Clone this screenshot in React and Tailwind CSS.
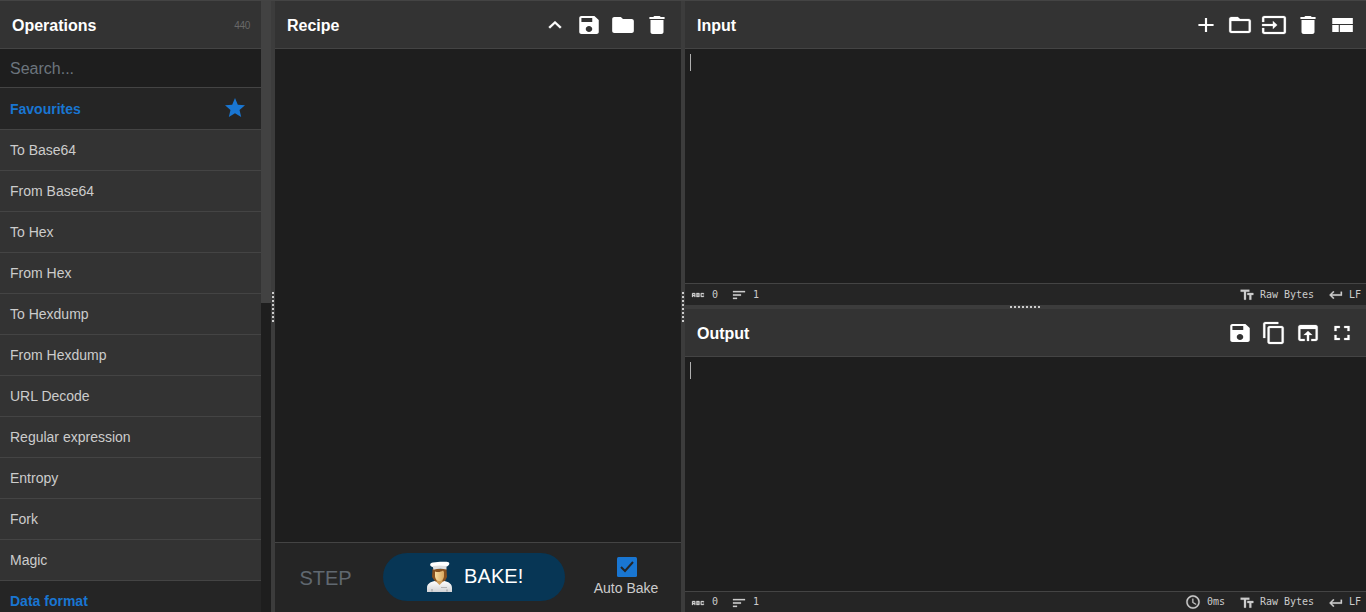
import React from "react";

const PATHS = {
  up: "M7.41 15.41 12 10.83l4.59 4.58L18 14l-6-6-6 6z",
  save: "M17 3H5c-1.11 0-2 .9-2 2v14c0 1.1.89 2 2 2h14c1.1 0 2-.9 2-2V7l-4-4zm-5 16c-1.66 0-3-1.34-3-3s1.34-3 3-3 3 1.34 3 3-1.34 3-3 3zm3-10H5V5h10v4z",
  folder: "M10 4H4c-1.1 0-1.99.9-1.99 2L2 18c0 1.1.9 2 2 2h16c1.1 0 2-.9 2-2V8c0-1.1-.9-2-2-2h-8l-2-2z",
  trash: "M6 19c0 1.1.9 2 2 2h8c1.1 0 2-.9 2-2V7H6v12zM19 4h-3.500l-1-1h-5l-1 1H5v2h14V4z",
  add: "M19 13h-6v6h-2v-6H5v-2h6V5h2v6h6v2z",
  folderOpen: "M20 6h-8l-2-2H4c-1.1 0-1.99.9-1.990 2L2 18c0 1.1.9 2 2 2h16c1.1 0 2-.9 2-2V8c0-1.1-.9-2-2-2zm0 12H4V8h16v10z",
  input: "M21 3.010H3c-1.1 0-2 .9-2 2V9h2V4.990h18v14.030H3V15H1v4.010c0 1.1.9 1.980 2 1.980h18c1.1 0 2-.88 2-1.980v-14c0-1.110-.9-2-2-2zM11 16l4-4-4-4v3H1v2h10v3z",
  layout: "M3 19h6v-7H3v7zm7 0h12v-7H10v7zM3 5v6h19V5H3z",
  copy: "M16 1H4c-1.1 0-2 .9-2 2v14h2V3h12V1zm3 4H8c-1.1 0-2 .9-2 2v14c0 1.1.9 2 2 2h11c1.1 0 2-.9 2-2V7c0-1.1-.9-2-2-2zm0 16H8V7h11v14z",
  open: "M19 4H5c-1.110 0-2 .9-2 2v12c0 1.1.89 2 2 2h4v-2H5V8h14v10h-4v2h4c1.1 0 2-.9 2-2V6c0-1.1-.89-2-2-2zm-7 6-4 4h3v6h2v-6h3l-4-4z",
  full: "M7 14H5v5h5v-2H7v-3zm-2-4h2V7h3V5H5v5zm12 7h-3v2h5v-5h-2v3zM14 5v2h3v3h2V5h-5z",
  star: "M12 17.27 18.18 21l-1.640-7.030L22 9.240l-7.190-.61L12 2 9.190 8.630 2 9.240l5.460 4.730L5.820 21z",
  text: "M2.500 4v3h5v12h3V7h5V4h-13zm19 5h-9v3h3v7h3v-7h3V9z",
  enter: "M19 7v4H5.830l3.580-3.590L8 6l-6 6 6 6 1.410-1.410L5.830 13H21V7z",
  lines: "M3 18h6v-2H3v2zM3 6v2h18V6H3zm0 7h12v-2H3v2z",
  clock: "M11.990 2C6.470 2 2 6.480 2 12s4.470 10 9.990 10C17.520 22 22 17.520 22 12S17.520 2 11.990 2zM12 20c-4.420 0-8-3.580-8-8s3.580-8 8-8 8 3.580 8 8-3.580 8-8 8zm.5-13H11v6l5.250 3.150.75-1.230-4.500-2.670z",
  abc: "M21 11h-1.500v-.5h-2v3h2V13H21v1c0 .55-.45 1-1 1h-3c-.55 0-1-.45-1-1v-4c0-.55.45-1 1-1h3c.55 0 1 .45 1 1v1zM8 10v5H6.500v-1.500h-2V15H3v-5c0-.55.45-1 1-1h3c.55 0 1 .45 1 1zm-1.500.5h-2V12h2v-1.500zM14.500 11c0 .55-.45 1-1 1 .55 0 1 .45 1 1v1c0 .55-.45 1-1 1h-4V9h4c.55 0 1 .45 1 1v1zM11 10.500v.75h2v-.75h-2zm0 2.250v.75h2v-.75h-2z",
};

function Icon({ name, className }) {
  return (
    <svg viewBox="0 0 24 24" preserveAspectRatio="none" fill="currentColor" className={`shrink-0 ${className}`}>
      <path d={PATHS[name]} />
    </svg>
  );
}

const BOLD = ["up", "folderOpen", "input", "copy", "open", "full"];

function Title({ label, icons, children }) {
  return (
    <header className="flex h-12 shrink-0 items-center justify-between border-b border-[#444] bg-[#333] pl-3 text-white">
      <h2 className="pt-[2px] text-base font-bold">{label}</h2>
      {children}
      {icons && (
        <div className="flex pr-[7px]">
          {icons.map((n) => (
            <button key={n} className="flex w-[34px] justify-center">
              <Icon name={n} className={`h-6 w-[26px] ${BOLD.includes(n) ? "stroke-white [stroke-width:0.2]" : ""}`} />
            </button>
          ))}
        </div>
      )}
    </header>
  );
}

const STATUS_ICON = "h-4 w-4 stroke-[#ccc] [stroke-width:0.4]";

function Status({ time }) {
  return (
    <div className={`flex shrink-0 items-center border-t border-[#444] bg-[#252525] pr-[5px] pl-[5px] font-['DejaVu_Sans_Mono',monospace] text-[10px] leading-none text-[#ccc] ${time ? "h-[21px]" : "h-[22px]"}`}>
      <Icon name="abc" className={`mt-px ${STATUS_ICON}`} />
      <span className="ml-[6px]">0</span>
      <Icon name="lines" className={`mt-px ml-[13px] ${STATUS_ICON}`} />
      <span className="ml-[6px]">1</span>
      <span className="grow" />
      {time && (
        <>
          <Icon name="clock" className={STATUS_ICON} />
          <span className="mr-[14px] ml-[6px]">{time}</span>
        </>
      )}
      <Icon name="text" className={`mt-px ${STATUS_ICON}`} />
      <span className="ml-[5px] -tracking-[0.02px]">Raw Bytes</span>
      <Icon name="enter" className={`mt-px ml-[14px] ${STATUS_ICON}`} />
      <span className="ml-[5px]">LF</span>
    </div>
  );
}

function Editor() {
  return (
    <div className="min-h-0 grow bg-[#1e1e1e] pt-[5px] pl-[5px]">
      <div className="h-[17px] w-px bg-[#b0b0b0]" />
    </div>
  );
}

function Dots({ vertical }) {
  return (
    <div className={vertical ? "flex flex-col gap-[2px]" : "flex gap-[2px]"}>
      {Array.from({ length: 8 }, (_, i) => (
        <i key={i} className="block size-[2px] bg-[#ccc]" />
      ))}
    </div>
  );
}

function VGutter() {
  return (
    <div className="flex w-1 shrink-0 flex-col items-center justify-center bg-[#3c3c3c]">
      <div className="flex h-[31px] items-center"><Dots vertical /></div>
    </div>
  );
}

function Chef() {
  return (
    <svg viewBox="0 0 32 32" className="mb-px h-8 w-8">
      <defs>
        <linearGradient id="coat" x1="0" y1="0" x2="0" y2="1">
          <stop offset="0" stopColor="#fff" />
          <stop offset="1" stopColor="#d2d3d5" />
        </linearGradient>
        <linearGradient id="skin" x1="0" y1="0" x2="1" y2="0">
          <stop offset="0" stopColor="#f8dda0" />
          <stop offset="1" stopColor="#d9a962" />
        </linearGradient>
      </defs>
      <path d="M9.500 8h14l.5 8-2.500 5h-9L9 16z" fill="#85501f" />
      <path d="M4 31v-4c0-4 3-6 7.500-7l5 2 5-2c4.500 1 7.500 3 7.500 7v4z" fill="url(#coat)" />
      <path d="M13.500 17h6v4l-3 3-3-3z" fill="#cf9d58" />
      <path d="M12 10.500c3 1 6 .5 8-1l1 1.500v4c0 3-2.500 5-4.500 5S12 18 12 15z" fill="url(#skin)" />
      <path d="M9.500 6C6.200 5 6.500 1.800 10 1.500c4-.8 9-.8 13-.7 4-.3 4.500 3 1 4.700z" fill="#fff" />
      <path d="M9.500 5c5-.7 9-.7 14 0v3.500c-4-1-9-1-13 .3z" fill="#dedede" />
      <path d="M9 28v2.500M24 28.500v2" stroke="#999" strokeWidth="1" />
      <path d="M18 26.500h6" stroke="#b5b5b5" strokeWidth="1" />
    </svg>
  );
}

const OPS = ["To Base64", "From Base64", "To Hex", "From Hex", "To Hexdump", "From Hexdump", "URL Decode", "Regular expression", "Entropy", "Fork", "Magic"];

export default function App() {
  return (
    <div className="flex h-[612px] w-[1366px] overflow-hidden border-t border-[#444] bg-[#1e1e1e] font-['Liberation_Sans',Arial,sans-serif]">
      <aside className="flex w-[271px] shrink-0">
        <div className="flex w-[261px] flex-col overflow-hidden">
          <Title label="Operations">
            <span className="pt-[2px] pr-[11px] text-[10px] font-normal -tracking-[0.3px] text-[#686868]">440</span>
          </Title>
          <div className="flex h-[39px] shrink-0 items-center border-b border-[#444] pt-[2px] pl-[10px] text-base text-[#6c757d]">
            Search...
          </div>
          <div className="flex h-[42px] shrink-0 items-center justify-between border-b border-[#444] bg-[#252525] pr-[14px] pl-[10px] text-sm font-bold text-[#1976d2]">
            <span>Favourites</span>
            <Icon name="star" className="mb-px h-6 w-6" />
          </div>
          {OPS.map((o) => (
            <div key={o} className="flex h-[41px] shrink-0 items-center border-b border-[#444] bg-[#333] pl-[10px] text-sm text-[#ccc]">
              {o}
            </div>
          ))}
          <div className="flex h-[40px] shrink-0 items-center bg-[#252525] pb-px pl-[10px] text-sm font-bold text-[#1976d2]">
            Data format
          </div>
        </div>
        <div className="w-[10px] bg-[#1e1e1e]">
          <div className="h-[302px] bg-[#424242]" />
        </div>
      </aside>
      <VGutter />
      <section className="flex w-[406px] shrink-0 flex-col">
        <Title label="Recipe" icons={["up", "save", "folder", "trash"]} />
        <div className="grow bg-[#1e1e1e]" />
        <div className="flex h-[70px] shrink-0 border-t border-[#444] bg-[#252525]">
          <button className="w-[101px] text-xl text-[#606870]">STEP</button>
          <button className="mt-[10px] ml-[7px] flex h-12 w-[182px] items-center rounded-full bg-[#073655] pl-10 text-xl text-white">
            <Chef />
            <span className="ml-[9px] pb-[3px] tracking-[0.1px]">BAKE!</span>
          </button>
          <label className="ml-[18px] flex w-[86px] flex-col items-center pt-[14px] text-sm text-[#ccc]">
            <svg viewBox="0 0 20 20" className="ml-px h-5 w-5">
              <rect width="20" height="20" rx="1.500" fill="#1976d2" />
              <path d="m4 10 4 4 8-9" fill="none" stroke="#252525" strokeWidth="2" />
            </svg>
            <span className="mt-[2px] leading-[18px] whitespace-nowrap">Auto Bake</span>
          </label>
        </div>
      </section>
      <VGutter />
      <main className="flex min-w-0 grow flex-col">
        <section className="flex h-[304px] shrink-0 flex-col">
          <Title label="Input" icons={["add", "folderOpen", "input", "trash", "layout"]} />
          <Editor />
          <Status />
        </section>
        <div className="flex h-1 shrink-0 items-center justify-center bg-[#3c3c3c] pr-[2px]"><Dots /></div>
        <section className="flex min-h-0 grow flex-col">
          <Title label="Output" icons={["save", "copy", "open", "full"]} />
          <Editor />
          <Status time="0ms" />
        </section>
      </main>
    </div>
  );
}
